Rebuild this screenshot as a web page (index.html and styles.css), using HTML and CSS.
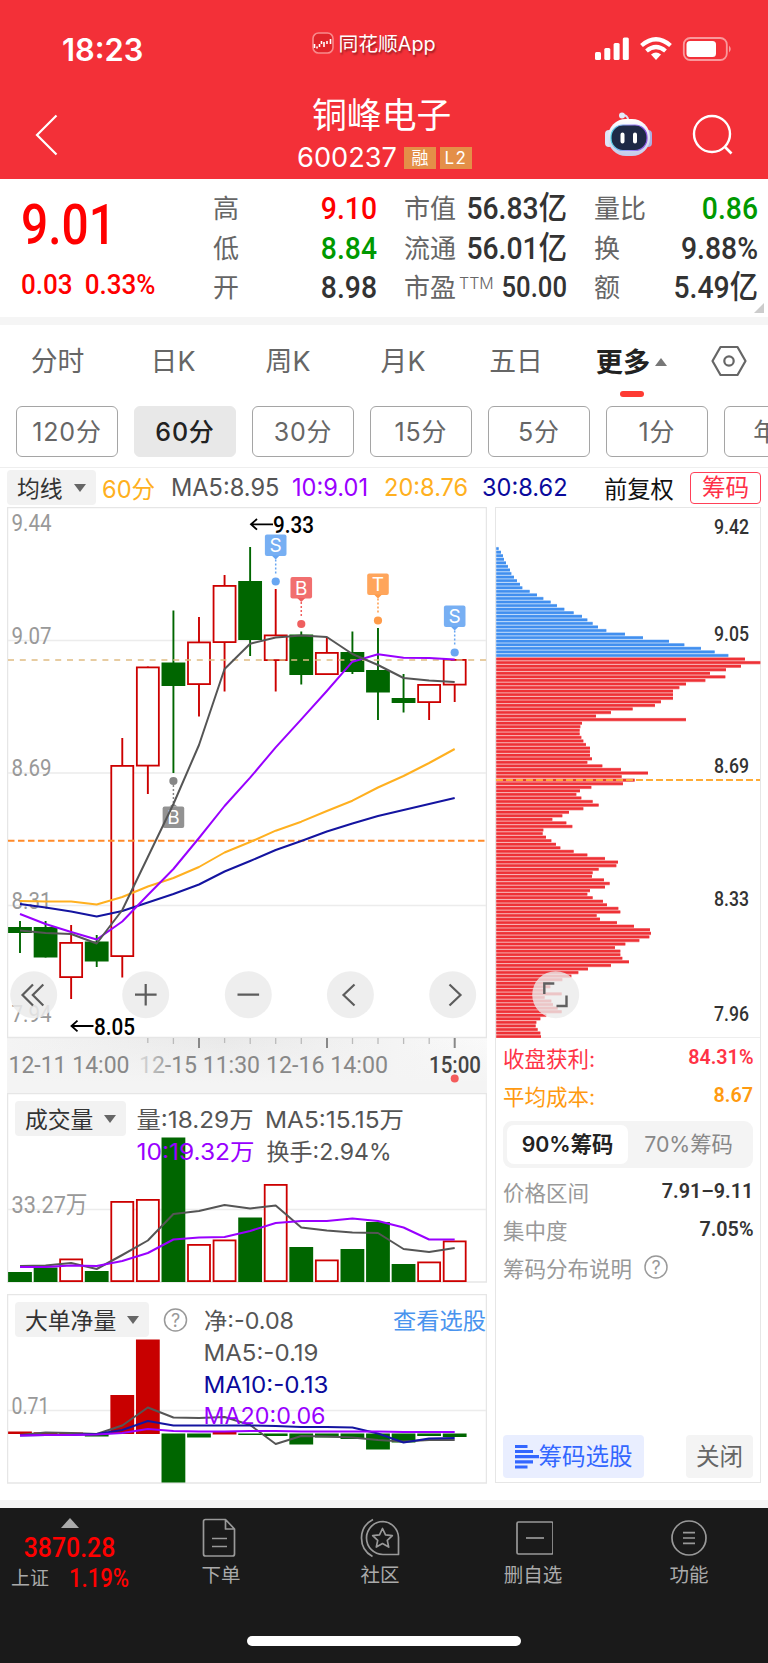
FILE: index.html
```
<!DOCTYPE html>
<html lang="zh-CN">
<head>
    <meta charset="UTF-8">
    <meta name="viewport" content="width=device-width, initial-scale=1.0">
    <title>铜峰电子 600237</title>
    <link rel="stylesheet" href="styles.css">
</head>
<body>
    <header class="header">
        <div class="status-bar">
            <span class="clock">18:23</span>
            <span class="app-name">
                <svg width="22" height="22" viewBox="0 0 22 22">
                    <rect x="1" y="1" width="20" height="20" rx="5.5" fill="#e0242b" stroke="#f88a8c" stroke-width="1.6"/>
                    <path d="M2.500 12v4M5 14.500v2M7.500 12v3M9.500 9v3M12 10v5M15 9v3M18.500 7v5" stroke="#fff" stroke-width="1.600"/>
                </svg>
                同花顺App
            </span>
            <span class="status-icons">
                <svg width="138" height="26" viewBox="594 36 138 26">
                    <g fill="#fff">
                        <rect x="595" y="52" width="6" height="8" rx="1.500"/>
                        <rect x="604.300" y="48" width="6" height="12" rx="1.500"/>
                        <rect x="613.600" y="43" width="6" height="17" rx="1.500"/>
                        <rect x="622.800" y="37.500" width="6" height="22.500" rx="1.500"/>
                        <path d="M656 60l-5-5.500q5-4 10 0z"/>
                    </g>
                    <g fill="none" stroke="#fff" stroke-width="4.200">
                        <path d="M641.500 45.500q14.500-12.500 29 0"/>
                        <path d="M646.500 51q9.500-8 19 0"/>
                    </g>
                    <rect x="683.800" y="38" width="43" height="22" rx="6.500" fill="none" stroke="#f9999c" stroke-width="1.800"/>
                    <rect x="686.500" y="41" width="29.500" height="16" rx="3.500" fill="#fff"/>
                    <path d="M729 45.500q3.500 3.500 0 7z" fill="#f9999c"/>
                </svg>
            </span>
        </div>
        <div class="nav-bar">
            <svg class="back" width="24" height="42" viewBox="0 0 24 42"><path d="M21.500 1.500L2 21l19.500 19.500" fill="none" stroke="#fff" stroke-width="2.200"/></svg>
            <div class="title">
                <h1>铜峰电子</h1>
                <p><span class="code">600237</span><span class="tag">融</span><span class="tag tag-l2">L2</span></p>
            </div>
            <div class="nav-actions">
                <svg width="50" height="46" viewBox="0 0 50 46">
                    <defs>
                        <linearGradient id="shell" x1="0" y1="0" x2="0" y2="1"><stop offset="0" stop-color="#fff"/><stop offset="1" stop-color="#c3cbea"/></linearGradient>
                        <linearGradient id="ring" x1="0" y1="0" x2="1" y2="0"><stop offset="0" stop-color="#56d3e8"/><stop offset=".5" stop-color="#9b8df5"/><stop offset="1" stop-color="#8a4fe0"/></linearGradient>
                    </defs>
                    <path d="M18 3.500q6-1 6 5" fill="none" stroke="#dbe2f6" stroke-width="2"/>
                    <circle cx="18" cy="3.500" r="3" fill="#e3ebfa"/>
                    <rect x="1" y="18" width="8" height="17" rx="4" fill="#dfe4f7"/>
                    <rect x="40" y="18" width="8" height="17" rx="4" fill="#aab0e2"/>
                    <rect x="4" y="7" width="42" height="37" rx="18" fill="url(#shell)"/>
                    <rect x="7" y="13" width="36" height="25.500" rx="12" fill="#1e2946" stroke="url(#ring)" stroke-width="1.200"/>
                    <path d="M18.500 22.500v7M31 22.500v7" stroke="#fff" stroke-width="4" stroke-linecap="round"/>
                </svg>
                <svg width="42" height="42" viewBox="0 0 42 42"><circle cx="20" cy="20" r="18" fill="none" stroke="#fff" stroke-width="2.400"/><path d="M32.500 32.500l7 7" stroke="#fff" stroke-width="2.600"/></svg>
            </div>
        </div>
    </header>

    <section class="quote">
        <div class="price">
            <div class="last din">9.01</div>
            <div class="change din"><span>0.03</span><span>0.33%</span></div>
        </div>
        <dl>
            <dt>高</dt><dd class="din up">9.10</dd>
            <dt>低</dt><dd class="din down">8.84</dd>
            <dt>开</dt><dd class="din">8.98</dd>
        </dl>
        <dl>
            <dt>市值</dt><dd class="din">56.83亿</dd>
            <dt>流通</dt><dd class="din">56.01亿</dd>
            <dt>市盈<sup>TTM</sup></dt><dd class="din small">50.00</dd>
        </dl>
        <dl>
            <dt>量比</dt><dd class="din down">0.86</dd>
            <dt>换</dt><dd class="din">9.88%</dd>
            <dt>额</dt><dd class="din">5.49亿</dd>
        </dl>
        <i class="corner"></i>
    </section>

    <nav class="tabs">
        <span>分时</span><span>日K</span><span>周K</span><span>月K</span><span>五日</span>
        <span class="active">更多<i class="tri-up"></i></span>
        <svg width="36" height="32" viewBox="0 0 36 32"><path d="M9.500 2h17l8 14-8 14h-17l-8-14z" fill="none" stroke="#666" stroke-width="2.200" stroke-linejoin="round"/><circle cx="18" cy="16" r="4.700" fill="none" stroke="#666" stroke-width="2.200"/></svg>
    </nav>
    <div class="periods">
        <span>120分</span><span class="active">60分</span><span>30分</span><span>15分</span><span>5分</span><span>1分</span><span>年K</span>
    </div>
    <div class="ma-row">
        <span class="picker">均线<i class="tri-down"></i></span>
        <span class="c-orange">60分</span>
        <span class="c-gray">MA5:8.95</span>
        <span class="c-purple">10:9.01</span>
        <span class="c-orange">20:8.76</span>
        <span class="c-navy">30:8.62</span>
        <span class="adjust">前复权</span>
        <span class="chip-toggle">筹码</span>
    </div>

    <main class="board">
        <div class="left">
            <svg class="kline" width="480" height="587" viewBox="7 507 480 587">
                <defs>
                    <linearGradient id="axisbg" x1="0" y1="0" x2="1" y2="0"><stop offset="0" stop-color="#f4f4f4"/><stop offset=".45" stop-color="#e9e9e9"/><stop offset="1" stop-color="#fafafa"/></linearGradient>
                    <linearGradient id="axisfade" x1="0" y1="0" x2="0" y2="1"><stop offset="0" stop-color="#f4f4f4" stop-opacity="0"/><stop offset=".8" stop-color="#f4f4f4"/></linearGradient>
                    <linearGradient id="labelfade" x1="0" y1="0" x2="1" y2="0"><stop offset="0" stop-color="#ddd"/><stop offset=".3" stop-color="#888"/></linearGradient>
                </defs>
                <rect x="7" y="1038" width="480" height="56" fill="url(#axisbg)"/>
                <rect x="7" y="1038" width="480" height="56" fill="url(#axisfade)"/>
                <rect class="frame" x="7.500" y="507.500" width="479" height="530"/>
                <path class="grid" d="M8 640.500h478M8 773h478M8 905.500h478"/>
                <g class="axis-label">
                    <text x="11.500" y="531" textLength="40">9.44</text>
                    <text x="11.500" y="643.500" textLength="40">9.07</text>
                    <text x="11.500" y="776" textLength="40">8.69</text>
                    <text x="11.500" y="909" textLength="40">8.31</text>
                    <text x="11.500" y="1022" textLength="40">7.94</text>
                </g>
                <g id="candles"></g>
                <path d="M8 660h478" stroke="#e0bc82" stroke-width="1.600" stroke-dasharray="6 5.800"/>
                <path d="M8 840.700h478" stroke="#ff8a2a" stroke-width="2" stroke-dasharray="6.500 3.500"/>
                <g id="signals"></g>
                <g id="kline-ma"></g>
                <g class="extreme">
                    <path d="M273 524.300h-22M257 519l-6 5.300 6 5.300"/>
                    <text x="273" y="532.500" textLength="41">9.33</text>
                    <path d="M93.500 1026h-22M77.500 1020.700l-6 5.300 6 5.300"/>
                    <text x="94" y="1034.500" textLength="41">8.05</text>
                </g>
                <g class="knobs">
                    <circle cx="33.700" cy="994.700" r="23.500"/><circle cx="145.700" cy="994.700" r="23.500"/><circle cx="248.300" cy="994.700" r="23.500"/><circle cx="350.400" cy="994.700" r="23.500"/><circle cx="452.700" cy="994.700" r="23.500"/>
                    <path d="M33 984.500l-10.500 10.500 10.500 10.500M43.300 984.500l-10.500 10.500 10.500 10.500M135 994.700h21.600M145.700 984v21.500M237.500 994.700h21.600M354.500 984.500l-11 10.500 11 10.500M449.500 984.500l11 10.500-11 10.500"/>
                </g>
                <path d="M147.800 1038v5M173.400 1038v6M224.600 1038v5M250.200 1038v6M275.700 1038v6M301.300 1038v6M352.500 1038v6M378 1038v6M403.600 1038v6M429.200 1038v6" stroke="#bbb" stroke-width="1.300"/>
                <path d="M199 1038v10M327 1038v10M454.700 1038v10" stroke="#888" stroke-width="2"/>
                <g class="time-label">
                    <text x="8.500" y="1072.500" textLength="121">12-11 14:00</text>
                    <text x="139" y="1072.500" textLength="121" class="fading">12-15 11:30</text>
                    <text x="266" y="1072.500" textLength="122">12-16 14:00</text>
                    <text x="429" y="1072.500" textLength="52" class="now">15:00</text>
                </g>
                <circle cx="454.700" cy="1078.500" r="4" fill="#f45b5b"/>
            </svg>

            <div class="sub-chart">
                <svg width="480" height="190" viewBox="7 1093 480 190">
                    <rect class="frame" x="7.500" y="1093.500" width="479" height="188.500"/>
                    <path class="grid" d="M8 1209.500h478"/>
                    <g class="axis-label"><text x="11.500" y="1213" textLength="76">33.27万</text></g>
                    <g id="volume"></g>
                    <g class="legend">
                        <text x="136.500" y="1128" textLength="117">量:18.29万</text>
                        <text x="265" y="1128" textLength="139">MA5:15.15万</text>
                        <text x="136.500" y="1159.500" textLength="118" class="purple">10:19.32万</text>
                        <text x="266.500" y="1159.500" textLength="125">换手:2.94%</text>
                    </g>
                </svg>
                <span class="picker">成交量<i class="tri-down"></i></span>
            </div>

            <div class="sub-chart">
                <svg width="480" height="190" viewBox="7 1294 480 190">
                    <rect class="frame" x="7.500" y="1294.500" width="479" height="188.500"/>
                    <path class="grid" d="M8 1410.500h478"/>
                    <g class="axis-label"><text x="11.500" y="1414" textLength="38">0.71</text></g>
                    <g id="netflow"></g>
                    <circle class="help" cx="175.500" cy="1320" r="11"/>
                    <text class="help-mark" x="175.500" y="1326.500">?</text>
                    <g class="legend">
                        <text x="204" y="1329" textLength="90">净:-0.08</text>
                        <text x="203.500" y="1361" textLength="115">MA5:-0.19</text>
                        <text x="203.500" y="1392.500" textLength="125" class="navy">MA10:-0.13</text>
                        <text x="203.500" y="1423.500" textLength="122" class="purple">MA20:0.06</text>
                        <text x="393" y="1329" textLength="93" class="link">查看选股</text>
                    </g>
                </svg>
                <span class="picker">大单净量<i class="tri-down"></i></span>
            </div>
        </div>

        <aside class="chips">
            <svg width="266" height="531" viewBox="495 507 266 531">
                <g id="chip-bars"></g>
                <path d="M496 780h264" stroke="#ffab35" stroke-width="2.200" stroke-dasharray="7 3"/>
                <g class="chip-label">
                    <text x="714" y="533.700" textLength="35">9.42</text>
                    <text x="714" y="640.500" textLength="35">9.05</text>
                    <text x="714" y="773" textLength="35">8.69</text>
                    <text x="714" y="905.500" textLength="35">8.33</text>
                    <text x="714" y="1020.500" textLength="35">7.96</text>
                </g>
                <circle cx="555.700" cy="994.700" r="23.500" fill="#ebebeb" fill-opacity=".8"/>
                <path d="M544.300 994v-10.500h10M566.500 995.500v10.500h-10" fill="none" stroke="#606060" stroke-width="2.400"/>
            </svg>
            <div class="chip-info">
                <p class="c-red"><span>收盘获利:</span><b class="din">84.31%</b></p>
                <p class="c-amber"><span>平均成本:</span><b class="din">8.67</b></p>
                <div class="segment"><span class="active">90%筹码</span><span>70%筹码</span></div>
                <p><span>价格区间</span><b class="din">7.91–9.11</b></p>
                <p><span>集中度</span><b class="din">7.05%</b></p>
                <p class="explain"><span>筹码分布说明</span>
                    <svg width="24" height="24" viewBox="0 0 24 24"><circle class="help" cx="12" cy="12" r="11"/><text class="help-mark" x="12" y="18.500">?</text></svg>
                </p>
                <div class="chip-actions">
                    <span class="pick"><svg width="24" height="24" viewBox="0 0 24 24"><path d="M0 1.500h12.500M0 6.500h18M0 11.700h24M0 16.900h18M0 22h12.500" stroke="#36f" stroke-width="3.200"/></svg>筹码选股</span>
                    <span class="close">关闭</span>
                </div>
            </div>
        </aside>
    </main>

    <footer class="tab-bar">
        <div class="index">
            <i class="tri-up"></i>
            <b class="din">3870.28</b>
            <p><span>上证</span><em class="din">1.19%</em></p>
        </div>
        <div class="item">
            <svg width="40" height="40" viewBox="0 0 40 40"><path d="M4.500 1.500h20l9 9.500v25q0 2-2 2h-27q-2 0-2-2v-32.500q0-2 2-2zM24.500 1.500v9.500h9M11 20.500h15M11 28.500h15"/></svg>
            <span>下单</span>
        </div>
        <div class="item">
            <svg width="42" height="40" viewBox="0 0 42 40"><path d="M14 1.500q-11.500 6-11.500 18.500t11 18.500M24 3.500a16.500 16.500 0 1 0 0 33h15.500v-17a16.500 16.500 0 0 0-15.500-16zM23.500 10.500l3 6.300 6.800.8-5 4.700 1.400 6.800-6.200-3.500-6.200 3.500 1.400-6.800-5-4.700 6.800-.8z"/></svg>
            <span>社区</span>
        </div>
        <div class="item">
            <svg width="40" height="40" viewBox="0 0 40 40"><rect x="4" y="4" width="36" height="32" rx="1.500"/><path d="M13 20h18"/></svg>
            <span>删自选</span>
        </div>
        <div class="item">
            <svg width="40" height="40" viewBox="0 0 40 40"><circle cx="20" cy="20" r="17"/><path d="M14 14.700h12M14 20h12M14 25.300h12"/></svg>
            <span>功能</span>
        </div>
        <div class="home-bar"></div>
    </footer>

    <script src="chart.js"></script>
</body>
</html>
```
FILE: styles.css
```
* {
    box-sizing: border-box;
}

body {
    margin: 0;
    width: 768px;
    height: 1663px;
    overflow: hidden;
    background: #fff;
    color: #333;
    font-family: Inter, "Noto Sans CJK SC", sans-serif;
}

h1, p, dl, dd {
    margin: 0;
    font-weight: 400;
}

svg {
    display: block;
    flex-shrink: 0;
}

/* narrow figures used for prices */
.din {
    font-family: Roboto, "Noto Sans CJK SC", sans-serif;
    font-weight: 500;
    transform: scaleX(.885);
    transform-origin: right center;
    white-space: nowrap;
}

.up { color: #f00; }
.down { color: #090; }
.c-orange { color: #ffb020; }
.c-gray { color: #555; }
.c-purple { color: #90f; }
.c-navy { color: #0a0a9c; }

.tri-up, .tri-down {
    display: inline-block;
    border: 6px solid transparent;
}

.tri-up {
    border-top: 0;
    border-bottom: 8px solid #777;
}

.tri-down {
    border-bottom: 0;
    border-top: 8px solid #666;
}

/* header */
.header {
    height: 179px;
    background: #f33038;
    color: #fff;
}

.status-bar {
    display: grid;
    grid-template-columns: 1fr auto 1fr;
    height: 90px;
    padding: 8px 36px 0 62px;
    align-items: center;
}

.clock {
    font-size: 30.8px;
    font-weight: 600;
}

.app-name {
    display: flex;
    align-items: center;
    gap: 4px;
    margin-left: -46px;
    margin-top: -13px;
    font-size: 19.8px;
    text-shadow: 1px 2px 2px rgba(0, 0, 0, .4);
}

.status-icons {
    justify-self: end;
}

.nav-bar {
    display: grid;
    grid-template-columns: 1fr auto 1fr;
    align-items: center;
    height: 89px;
    padding: 0 34px 0 35px;
}

.title h1 {
    padding-left: 15px;
    font-size: 34.8px;
    line-height: 48px;
}

.title p {
    display: flex;
    align-items: center;
    height: 38px;
    margin-bottom: 2px;
    gap: 4px;
}

.code {
    font-size: 27.2px;
    margin-right: 3px;
}

.tag {
    width: 32px;
    height: 22px;
    background: #e48f48;
    font-size: 17px;
    line-height: 22px;
    text-align: center;
}

.tag-l2 {
    letter-spacing: 1.5px;
}

.nav-actions {
    display: flex;
    justify-content: flex-end;
    align-items: center;
    gap: 38px;
}

/* quote */
.quote {
    position: relative;
    display: grid;
    grid-template-columns: 165px 164px 163px 164px;
    column-gap: 27px;
    height: 146px;
    padding: 10px 0 0 21px;
    border-bottom: 8px solid #f5f5f5;
}

.price {
    color: #f00;
}

.price .last {
    font-size: 55px;
    line-height: 72px;
    transform: scaleX(.87);
    transform-origin: left center;
}

.price .change {
    display: flex;
    gap: 13px;
    margin-top: 4px;
    font-size: 28px;
    line-height: 40px;
    transform: scaleX(.93);
    transform-origin: left center;
}

.quote dl {
    display: grid;
    grid-template-columns: auto auto;
    grid-auto-rows: 39.5px;
    align-items: center;
    justify-content: space-between;
}

.quote dt {
    font-size: 26px;
    color: #666;
    line-height: 39px;
    white-space: nowrap;
}

.quote dd {
    justify-self: end;
    width: 0;
    display: flex;
    justify-content: flex-end;
    font-size: 32px;
    line-height: 39px;
}

.quote dd.small {
    font-size: 29px;
}

.quote sup {
    font-size: 16px;
    font-weight: 300;
    line-height: 0;
    vertical-align: 8px;
    margin-left: 3px;
}

.corner {
    position: absolute;
    right: 4px;
    bottom: 4px;
    border-left: 10px solid transparent;
    border-bottom: 10px solid #ccc;
}

/* tabs */
.tabs {
    display: grid;
    grid-template-columns: 115px 116px 114px 116px 110px 121px 1fr;
    align-items: center;
    height: 73px;
    font-size: 26.8px;
    color: #666;
}

.tabs span {
    padding-bottom: 4px;
    text-align: center;
}

.tabs svg {
    margin-left: 19px;
    margin-bottom: 2px;
}

.tabs .active {
    position: relative;
    color: #222;
    font-weight: 700;
    font-size: 27.2px;
}

.tabs .active .tri-up {
    margin-left: 5px;
    vertical-align: 6px;
}

.tabs .active::after {
    content: "";
    position: absolute;
    left: 49px;
    bottom: -13px;
    width: 24px;
    height: 6px;
    border-radius: 3px;
    background: #fe3b33;
}

.periods {
    display: flex;
    gap: 16px;
    height: 70px;
    padding: 8px 0 0 16px;
    border-bottom: 1px solid #eee;
    overflow: hidden;
}

.periods span {
    flex: 0 0 102px;
    height: 51px;
    border: 1px solid #a5a5a5;
    border-radius: 6px;
    font-size: 25px;
    letter-spacing: .8px;
    line-height: 51px;
    text-align: center;
    color: #666;
}

.periods .active {
    border-color: #e8e8e8;
    background: #e8e8e8;
    color: #222;
    font-weight: 500;
}

.ma-row {
    display: grid;
    grid-template-columns: 95px 69px 121px 92px 98px 122px 86px 71px;
    align-items: center;
    height: 39px;
    padding-left: 7px;
    font-size: 23.6px;
    white-space: nowrap;
}

.picker {
    display: flex;
    align-items: center;
    gap: 11px;
    height: 35px;
    width: max-content;
    padding: 0 10px;
    border-radius: 4px;
    background: #f2f2f2;
    font-size: 22.8px;
    color: #333;
}

.ma-row .adjust {
    color: #111;
    font-size: 23.3px;
}

.chip-toggle {
    height: 32px;
    border: 1.5px solid #ff4058;
    border-radius: 4px;
    color: #ff3048;
    line-height: 29px;
    text-align: center;
}

/* charts */
.board {
    display: flex;
    gap: 8px;
    height: 993px;
    padding-left: 7px;
}

.frame {
    fill: none;
    stroke: #e6e6e6;
    stroke-width: 1.5;
}

.grid {
    stroke: #ececec;
    stroke-width: 1.3;
}

.board svg text {
    font-family: Inter, "Noto Sans CJK SC", sans-serif;
}

.board .axis-label text, .board .time-label text, .board .chip-label text, .board .extreme text {
    font-family: Roboto, "Noto Sans CJK SC", sans-serif;
}

.axis-label text {
    font-size: 23.5px;
    fill: #999;
}

.time-label text {
    font-size: 23.5px;
    fill: #888;
}

.time-label .fading {
    fill: url(#labelfade);
}

.time-label .now {
    fill: #444;
    font-weight: 500;
}

.extreme text {
    font-size: 23.5px;
    font-weight: 500;
    fill: #000;
}

.extreme path {
    fill: none;
    stroke: #000;
    stroke-width: 1.8;
}

.knobs circle {
    fill: #ebebeb;
    fill-opacity: .85;
}

.knobs path {
    fill: none;
    stroke: #5c5c5c;
    stroke-width: 2.2;
}

.line {
    fill: none;
    stroke-width: 2;
    stroke-linejoin: round;
}

.marker text {
    font-size: 19px;
    fill: #fff;
    text-anchor: middle;
}

.legend text {
    font-size: 22.8px;
    fill: #555;
}

.legend .purple { fill: #90f; }
.legend .navy { fill: #0a0a9c; }
.legend .link { fill: #4a94ee; }

.help {
    fill: none;
    stroke: #999;
    stroke-width: 1.5;
}

.help-mark {
    font-size: 18px;
    fill: #999;
    text-anchor: middle;
}

.kline {
    margin-bottom: -1px;
}

.sub-chart {
    position: relative;
    height: 201px;
}

.sub-chart .picker {
    position: absolute;
    left: 8px;
    top: 8px;
}

/* chip distribution */
.chips {
    width: 266px;
    height: 976px;
    border: 1px solid #e6e6e6;
}

.chips > svg {
    margin: -1px;
}

.chip-label text {
    font-size: 20px;
    font-weight: 500;
    fill: #333;
}

.chip-info {
    height: 445px;
    padding: 0 7px;
    border-top: 1px solid #eee;
    display: flex;
    flex-direction: column;
}

.chip-info p {
    display: flex;
    justify-content: space-between;
    align-items: center;
    height: 38px;
    font-size: 21.5px;
    color: #999;
}

.chip-info b {
    font-size: 21px;
    font-weight: 600;
    color: #333;
    transform: scaleX(.94);
}

.chip-info .c-red, .chip-info .c-red b { color: #ff3346; }
.chip-info .c-amber, .chip-info .c-amber b { color: #ff9a10; }

.segment {
    display: flex;
    height: 47px;
    margin: 7px 0 4px;
    padding: 4px;
    border-radius: 9px;
    background: #f4f4f4;
}

.segment span {
    flex: 1;
    border-radius: 7px;
    font-size: 21.3px;
    line-height: 39px;
    text-align: center;
    color: #888;
}

.segment .active {
    background: #fff;
    color: #222;
    font-weight: 600;
}

.chip-info .explain {
    justify-content: flex-start;
    gap: 12px;
}

.chip-actions {
    display: flex;
    justify-content: space-between;
    margin-top: auto;
    margin-bottom: 4px;
    font-size: 23.5px;
    line-height: 43px;
}

.chip-actions span {
    display: flex;
    align-items: center;
    justify-content: center;
    height: 43px;
    border-radius: 4px;
}

.chip-actions .pick {
    width: 141px;
    background: #e9eeff;
    color: #36f;
}

.chip-actions .close {
    width: 67px;
    background: #f4f4f4;
    color: #666;
}

/* bottom bar */
.tab-bar {
    position: relative;
    display: grid;
    grid-template-columns: 139px 164px 154px 152px 160px;
    height: 163px;
    border-top: 8px solid #f5f5f5;
    background: #1a1a1a;
    color: #aaa;
}

.index {
    text-align: center;
    padding-top: 10px;
}

.index .tri-up {
    display: block;
    width: 0;
    margin: 0 auto;
    border-width: 0 9px 10px;
    border-bottom-color: #aaa;
}

.index .din {
    color: #f00;
    font-style: normal;
}

.index b {
    display: block;
    margin-top: 5px;
    font-size: 27px;
    line-height: 30px;
    transform: scaleX(.92);
    transform-origin: center;
}

.index p {
    display: flex;
    gap: 20px;
    padding-left: 11px;
    font-size: 19px;
    line-height: 31px;
}

.index em {
    font-size: 25px;
    transform-origin: left center;
}

.item {
    display: flex;
    flex-direction: column;
    align-items: center;
    padding-top: 10px;
    font-size: 19.5px;
}

.item svg {
    fill: none;
    stroke: #999;
    stroke-width: 1.7;
    stroke-linejoin: round;
}

.item span {
    margin-top: 2px;
    line-height: 30px;
}

.home-bar {
    position: absolute;
    left: 247px;
    bottom: 17px;
    width: 274px;
    height: 10px;
    border-radius: 5px;
    background: #fff;
}
```
FILE: chart.js
```
const RED = "#cc0000";
const GREEN = "#006600";
const GRAY = "#555";
const PURPLE = "#9900ff";
const ORANGE = "#ffb020";
const NAVY = "#1414a0";

const STEP = 25.57;
const x = i => 20 + i * STEP;

function add(id, html) {
    document.getElementById(id).innerHTML += html;
}

function line(id, values, color) {
    const points = values.map((v, i) => `${x(i)},${v}`).join(" ");
    add(id, `<polyline class="line" points="${points}" stroke="${color}"/>`);
}

function bar(id, i, color, top, bottom, solid) {
    if (color === RED && !solid) {
        add(id, `<rect x="${x(i) - 11}" y="${top + .9}" width="22" height="${bottom - top - 1.8}" fill="#fff" stroke="${RED}" stroke-width="1.8"/>`);
    } else {
        add(id, `<rect x="${x(i) - 11.9}" y="${top}" width="23.8" height="${bottom - top}" fill="${color}"/>`);
    }
}

// color, high, top, bottom, low
const candles = [
    [GREEN, 921, 927, 933, 953], [GREEN, 921, 927, 957.5, 957.5], [RED, 925, 942, 978, 999],
    [GREEN, 935, 941.5, 961.5, 967], [RED, 738, 765, 957, 977.5], [RED, 666.5, 666.5, 766.5, 794],
    [GREEN, 610.5, 662.5, 686, 773], [RED, 617, 641.5, 685, 716.5], [RED, 575, 585, 643, 691.5],
    [GREEN, 547, 581, 640, 656], [RED, 589, 634.5, 661, 691.5], [GREEN, 631.5, 634.5, 675, 684.5],
    [RED, 638, 652, 675, 675], [GREEN, 631.5, 652, 672, 674], [GREEN, 628, 670, 692.5, 720],
    [GREEN, 674, 698, 703, 712.5], [RED, 684, 684, 703, 720], [RED, 659, 659, 685.5, 702]
];
candles.forEach(([color, high, top, bottom, low], i) => {
    add("candles", `<path d="M${x(i)} ${high}V${low}" stroke="${color}" stroke-width="1.9"/>`);
    bar("candles", i, color, top, bottom);
});

line("kline-ma", [901, 901.5, 901.5, 904.5, 897, 886.5, 878, 867, 852.5, 842, 830.7, 821.7, 811, 800.7, 787.5, 776, 763, 749], ORANGE);
line("kline-ma", [904, 907.5, 911.5, 916.5, 911, 902.5, 894, 884.5, 871.5, 861, 850, 841, 831.5, 823.5, 816, 810, 804, 798], NAVY);
line("kline-ma", [914, 924, 932, 939.5, 921.5, 895, 869, 838, 806, 777.7, 747.3, 719.3, 691, 661.7, 654.3, 657.7, 658, 659.5], PURPLE);
line("kline-ma", [930.5, 933, 934, 943.5, 910, 857, 804, 745, 669, 643.7, 637.5, 635.5, 637, 654, 665, 678, 680.5, 682], GRAY);

// buy / sell markers: letter, index, top of the box, y of the dot, color
[["S", 10, 534.5, 581.5, "#68a6f2"], ["B", 11, 577, 624, "#ef5f5f"], ["T", 14, 573.5, 620.5, "#ff9b49"], ["S", 17, 605.5, 652.5, "#68a6f2"], ["B", 6, 806.5, 781, "#868686"]].forEach(([letter, i, top, dot, color]) => {
    const cx = x(i);
    const below = dot > top;
    const tip = below ? `M${cx - 4} ${top + 21}l4 4 4-4z` : `M${cx - 4} ${top}l4-3 4 3z`;
    const stem = below ? `M${cx} ${top + 25}V${dot - 7}` : `M${cx} ${dot + 4}V${top - 3}`;
    add("signals", `<g class="marker"><path d="${stem}" stroke="${color}" stroke-width="1.5" stroke-dasharray="2 2"/><g fill="${color}"><rect x="${cx - 10.8}" y="${top}" width="21.6" height="21.5" rx="2" fill-opacity=".9"/><path d="${tip}"/><circle cx="${cx}" cy="${dot}" r="4.1"/></g><text x="${cx}" y="${top + 17.5}">${letter}</text></g>`);
});

[[GREEN, 1272], [GREEN, 1267.5], [RED, 1258.5], [GREEN, 1271], [RED, 1201], [RED, 1199], [GREEN, 1137.5], [RED, 1244], [RED, 1239.5],
 [GREEN, 1217.5], [RED, 1184], [GREEN, 1247], [RED, 1259.5], [GREEN, 1249], [GREEN, 1222], [GREEN, 1264], [RED, 1261.5], [RED, 1240.5]
].forEach(([color, top], i) => bar("volume", i, color, top, 1282));
line("volume", [1266, 1265.5, 1263, 1269, 1255, 1240.5, 1214, 1211, 1205, 1208.5, 1205.5, 1227.5, 1230.5, 1232.5, 1233, 1249, 1252, 1248], GRAY);
line("volume", [1267, 1267, 1265.5, 1266, 1261, 1253, 1239.5, 1237.5, 1237, 1231, 1223, 1221, 1221, 1218.5, 1221, 1227.5, 1239.5, 1239.5], PURPLE);

[[1431.5, 1434], [1432.3, 1434], [1432.5, 1434], [1433.5, 1436.5], [1395, 1434], [1339.5, 1434], [1433.5, 1482.5], [1433.5, 1437.5], [1432, 1434.5],
 [1433.5, 1435], [1433.5, 1436], [1433.5, 1444.5], [1433.5, 1437.5], [1433.5, 1439], [1433.5, 1449.5], [1433.5, 1442.5], [1433.5, 1436], [1433.5, 1437]
].forEach(([top, bottom], i) => bar("netflow", i, top < 1433 ? "#c80000" : GREEN, top, bottom, true));
line("netflow", [1435, 1432.5, 1433, 1434, 1425.5, 1407.5, 1417.5, 1418, 1417, 1425, 1444, 1436, 1436.5, 1437.5, 1440, 1441.5, 1440, 1440], GRAY);
line("netflow", [1435.5, 1435, 1435, 1434, 1430, 1421, 1425.5, 1425.5, 1425.5, 1425.5, 1426, 1427, 1427, 1427.5, 1433.5, 1442.5, 1438.5, 1438], NAVY);
line("netflow", [1435.5, 1435, 1435, 1434.5, 1433, 1429, 1431, 1431.5, 1431.5, 1431, 1431, 1431.5, 1431.5, 1431.5, 1431.5, 1432, 1432, 1432], PURPLE);

// chip distribution, top price to bottom price
const chips = [
    7, 14, 20, 23, 29, 35, 41, 45, 53, 62, 71, 78, 100, 122, 141, 163, 182, 204, 232, 257, 273, 289, 305, 330, 386, 440, 518, 564, 614, 655, 696,
    746, 792, 734, 689, 641, 687, 627, 569, 549, 530, 530, 530, 494, 476, 409, 344, 299, 569, 257, 252, 250, 250, 255, 261, 269, 281, 281, 281, 287,
    273, 318, 374, 455, 376, 415, 380, 285, 251, 240, 255, 289, 307, 261, 218, 198, 168, 210, 228, 141, 139, 149, 165, 179, 192, 232, 273, 326, 365,
    360, 307, 289, 287, 323, 340, 326, 281, 273, 289, 320, 332, 366, 372, 301, 311, 362, 413, 461, 464, 459, 429, 387, 356, 372, 372, 378, 398, 344,
    275, 246, 225, 198, 162, 162, 147, 196, 145, 165, 170, 184, 196, 150, 132, 120, 118, 124, 132, 134
];
const gap = 488 / (chips.length - 1);
chips.forEach((w, i) => {
    const y = 548.6 + i * gap;
    const color = i < 31 ? "#418fef" : "#ee3136";
    const pale = i < 31 ? "#a5cbf8" : "#f59a9c";
    add("chip-bars", `<rect x="496.3" y="${y - 1.7}" width="${w / 3}" height="${gap}" fill="${pale}"/><rect x="496.3" y="${y - 1.2}" width="${w / 3}" height="2.4" fill="${color}"/>`);
});

// stretch labelled text to its measured width, glyphs included
document.querySelectorAll("text[textLength]").forEach(t => t.setAttribute("lengthAdjust", "spacingAndGlyphs"));
```
